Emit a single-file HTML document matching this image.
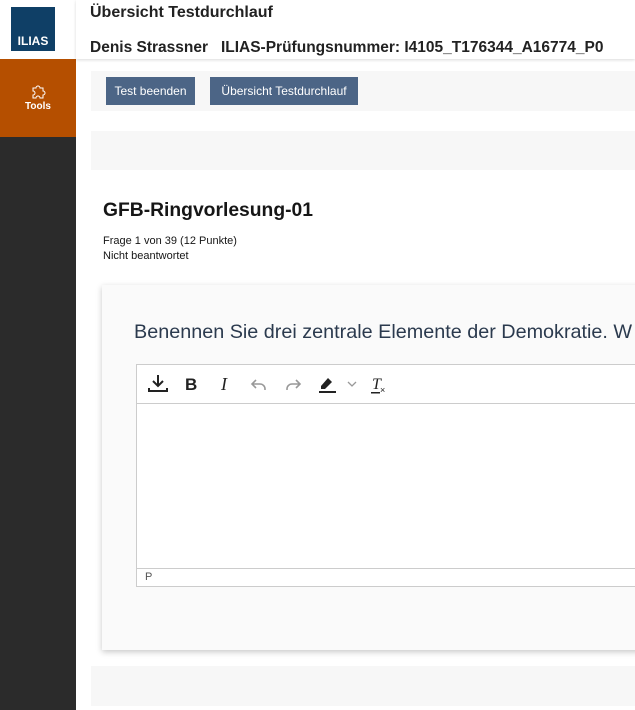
<!DOCTYPE html>
<html><head><meta charset="utf-8"><style>
*{margin:0;padding:0;box-sizing:border-box}
body{width:635px;height:710px;overflow:hidden;background:#fff;font-family:"Liberation Sans",sans-serif;position:relative;color:#161616}
.abs{position:absolute}
</style></head><body>
<div class="abs" style="left:0;top:0;width:76px;height:710px;background:#2b2b2b"></div>
<div class="abs" style="left:0;top:0;width:76px;height:59px;background:#fff"></div>
<div class="abs" style="left:11px;top:7px;width:44px;height:44px;background:#0f3f66;color:#fff;font-weight:bold;font-size:12px;text-align:center;padding-top:27px">ILIAS</div>
<div class="abs" style="left:0;top:59px;width:76px;height:78px;background:#b54f00;color:#fff;font-size:10px;font-weight:bold;text-align:center;padding-top:24px">
<svg width="18" height="16" viewBox="0 0 18 16" style="display:block;margin:0 auto 2px"><path d="M4 5h3a2 2 0 1 1 4 0h3v3a2 2 0 1 1 0 4v3h-3a2 2 0 1 0-4 0H4v-3a2 2 0 1 0 0-4z" fill="none" stroke="#fff" stroke-width="1"/></svg>Tools</div>
<div class="abs" style="left:76px;top:0;width:559px;height:59px;background:#fff;box-shadow:0 1px 3px rgba(0,0,0,.15)"></div>
<div class="abs" style="left:90px;top:4px;font-size:16px;font-weight:bold;color:#222">Übersicht Testdurchlauf</div>
<div class="abs" style="left:90px;top:39px;font-size:15.5px;font-weight:bold;color:#222">Denis Strassner&nbsp;&nbsp; ILIAS-Prüfungsnummer: I4105_T176344_A16774_P0</div>
<div class="abs" style="left:91px;top:71px;width:544px;height:40px;background:#f7f7f7"></div>
<div class="abs" style="left:106px;top:77px;width:89px;height:28px;background:#4c6586;color:#fff;font-size:12px;line-height:28px;text-align:center">Test beenden</div>
<div class="abs" style="left:210px;top:77px;width:148px;height:28px;background:#4c6586;color:#fff;font-size:12px;line-height:28px;text-align:center">Übersicht Testdurchlauf</div>
<div class="abs" style="left:91px;top:131px;width:544px;height:39px;background:#f7f7f7"></div>
<div class="abs" style="left:103px;top:200px;font-size:19.3px;font-weight:bold;color:#161616">GFB-Ringvorlesung-01</div>
<div class="abs" style="left:103px;top:234px;font-size:11px;line-height:15px">Frage 1 von 39 (12 Punkte)<br>Nicht beantwortet</div>
<div class="abs" style="left:102px;top:285px;width:560px;height:365px;background:#fafafa;box-shadow:0 2px 6px rgba(0,0,0,.22)"></div>
<div class="abs" style="left:134px;top:321px;font-size:19.8px;color:#2b3a4e;white-space:nowrap">Benennen Sie drei zentrale Elemente der Demokratie. W</div>
<div class="abs" style="left:136px;top:364px;width:510px;height:223px;background:#fff;border:1px solid #ccc"></div>
<div class="abs" style="left:136px;top:403px;width:510px;height:1px;background:#ccc"></div>
<div class="abs" style="left:136px;top:568px;width:510px;height:1px;background:#ccc"></div>
<div class="abs" style="left:145px;top:571px;font-size:11px;color:#555">P</div>
<svg class="abs" style="left:145px;top:372px" width="250" height="24" viewBox="0 0 250 24">
<g fill="none" stroke="#222" stroke-width="2">
<path d="M13 3v11M8 9l5 5 5-5M4 16v3h18v-3"/>
</g>
<text x="40" y="18" font-family="Liberation Sans" font-weight="bold" font-size="17" fill="#222">B</text>
<text x="76" y="18" font-family="Liberation Serif" font-style="italic" font-size="18" fill="#222">I</text>
<path d="M111 8l-4 4 4 4M107 12h8a5 5 0 0 1 5 5v1" fill="none" stroke="#999" stroke-width="1.6"/>
<path d="M151 8l4 4-4 4M155 12h-8a5 5 0 0 0-5 5v1" fill="none" stroke="#999" stroke-width="1.6"/>
<path d="M176 14l7-8 4 4-7 7h-4z" fill="#222"/><rect x="174" y="19" width="17" height="2" fill="#222"/>
<path d="M203 10l4 4 4-4" fill="none" stroke="#999" stroke-width="1.3"/>
<text x="227" y="17" font-family="Liberation Serif" font-style="italic" font-size="16" fill="#222">T</text>
<text x="235" y="21" font-family="Liberation Sans" font-size="9" fill="#222">×</text>
<rect x="226" y="20" width="9" height="1.5" fill="#222"/>
</svg>
<div class="abs" style="left:91px;top:666px;width:544px;height:40px;background:#f7f7f7"></div>
</body></html>
